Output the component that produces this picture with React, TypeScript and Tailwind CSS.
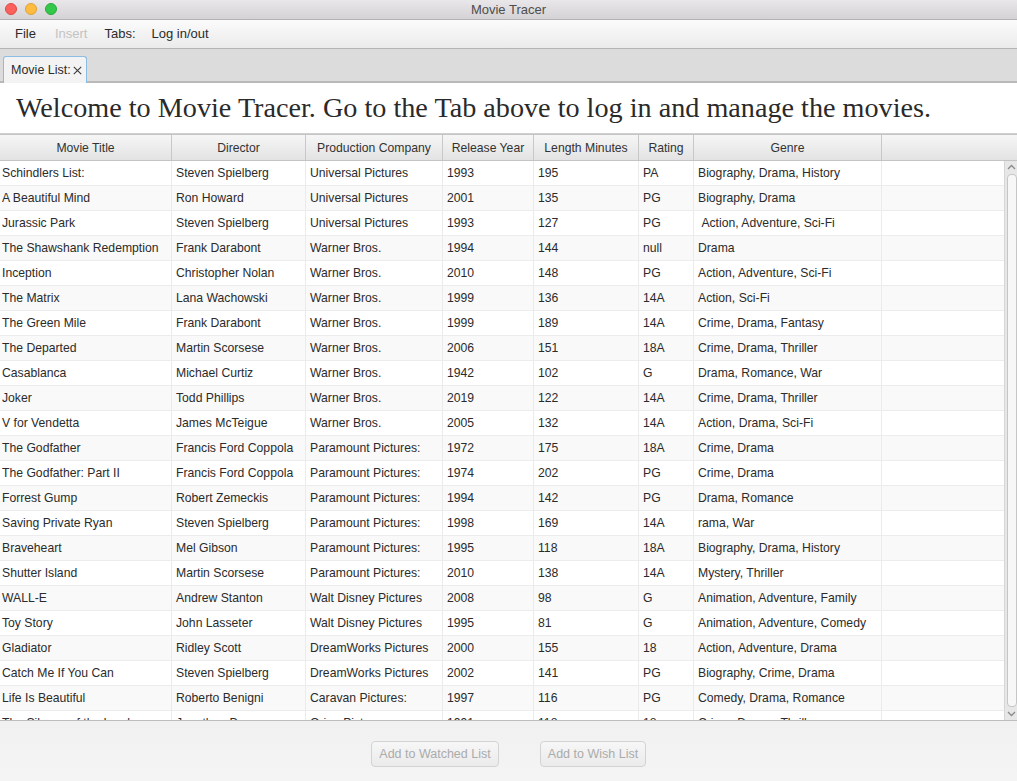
const columns = [
  { title: "Movie Title", w: "w-[172px]" },
  { title: "Director", w: "w-[134px]" },
  { title: "Production Company", w: "w-[137px]" },
  { title: "Release Year", w: "w-[91px]" },
  { title: "Length Minutes", w: "w-[105px]" },
  { title: "Rating", w: "w-[55px]" },
  { title: "Genre", w: "w-[188px]" },
];

const movies: string[][] = [
  ["Schindlers List:", "Steven Spielberg", "Universal Pictures", "1993", "195", "PA", "Biography, Drama, History"],
  ["A Beautiful Mind", "Ron Howard", "Universal Pictures", "2001", "135", "PG", "Biography, Drama"],
  ["Jurassic Park", "Steven Spielberg", "Universal Pictures", "1993", "127", "PG", "\u00a0Action, Adventure, Sci-Fi"],
  ["The Shawshank Redemption", "Frank Darabont", "Warner Bros.", "1994", "144", "null", "Drama"],
  ["Inception", "Christopher Nolan", "Warner Bros.", "2010", "148", "PG", "Action, Adventure, Sci-Fi"],
  ["The Matrix", "Lana Wachowski", "Warner Bros.", "1999", "136", "14A", "Action, Sci-Fi"],
  ["The Green Mile", "Frank Darabont", "Warner Bros.", "1999", "189", "14A", "Crime, Drama, Fantasy"],
  ["The Departed", "Martin Scorsese", "Warner Bros.", "2006", "151", "18A", "Crime, Drama, Thriller"],
  ["Casablanca", "Michael Curtiz", "Warner Bros.", "1942", "102", "G", "Drama, Romance, War"],
  ["Joker", "Todd Phillips", "Warner Bros.", "2019", "122", "14A", "Crime, Drama, Thriller"],
  ["V for Vendetta", "James McTeigue", "Warner Bros.", "2005", "132", "14A", "Action, Drama, Sci-Fi"],
  ["The Godfather", "Francis Ford Coppola", "Paramount Pictures:", "1972", "175", "18A", "Crime, Drama"],
  ["The Godfather: Part II", "Francis Ford Coppola", "Paramount Pictures:", "1974", "202", "PG", "Crime, Drama"],
  ["Forrest Gump", "Robert Zemeckis", "Paramount Pictures:", "1994", "142", "PG", "Drama, Romance"],
  ["Saving Private Ryan", "Steven Spielberg", "Paramount Pictures:", "1998", "169", "14A", "rama, War"],
  ["Braveheart", "Mel Gibson", "Paramount Pictures:", "1995", "118", "18A", "Biography, Drama, History"],
  ["Shutter Island", "Martin Scorsese", "Paramount Pictures:", "2010", "138", "14A", "Mystery, Thriller"],
  ["WALL-E", "Andrew Stanton", "Walt Disney Pictures", "2008", "98", "G", "Animation, Adventure, Family"],
  ["Toy Story", "John Lasseter", "Walt Disney Pictures", "1995", "81", "G", "Animation, Adventure, Comedy"],
  ["Gladiator", "Ridley Scott", "DreamWorks Pictures", "2000", "155", "18", "Action, Adventure, Drama"],
  ["Catch Me If You Can", "Steven Spielberg", "DreamWorks Pictures", "2002", "141", "PG", "Biography, Crime, Drama"],
  ["Life Is Beautiful", "Roberto Benigni", "Caravan Pictures:", "1997", "116", "PG", "Comedy, Drama, Romance"],
  ["The Silence of the Lambs", "Jonathan Demme", "Orion Pictures", "1991", "118", "18", "Crime, Drama, Thriller"],
];

function TitleBar() {
  return (
    <div className="relative h-[20px] shrink-0 bg-gradient-to-b from-[#e9e7e9] to-[#d4d2d4] border-b border-[#b3b3b3] flex items-center justify-center">
      <div className="absolute left-[5px] top-[3px] flex gap-[8px]">
        <span className="w-[12px] h-[12px] rounded-full bg-[#fc605c] border border-[#de4a45]" />
        <span className="w-[12px] h-[12px] rounded-full bg-[#fdbc40] border border-[#dea236]" />
        <span className="w-[12px] h-[12px] rounded-full bg-[#34c84a] border border-[#2aa83b]" />
      </div>
      <span className="text-[13px] text-[#4d4d4d]">Movie Tracer</span>
    </div>
  );
}

function MenuBar() {
  return (
    <div className="h-[29px] shrink-0 bg-gradient-to-b from-[#fbfbfb] to-[#ebebeb] border-b border-[#b4b4b4] flex items-center text-[13px] text-[#2b2b2b]">
      <span className="ml-[15px]">File</span>
      <span className="ml-[19px] text-[#c3c3c3]">Insert</span>
      <span className="ml-[17px]">Tabs:</span>
      <span className="ml-[16px]">Log in/out</span>
    </div>
  );
}

function TabStrip() {
  return (
    <div className="h-[34px] shrink-0 bg-[#dcdcdc] border-b-2 border-[#b9b9b9] flex items-end pl-[3px]">
      <div className="h-[27px] w-[84px] -mb-[2px] bg-[#f3f3f3] border border-b-0 border-[#8bbce3] rounded-t-[3px] flex items-center pl-[7px] text-[12.5px] text-[#2b2b2b]">
        <span>Movie List:</span>
        <svg width="9" height="9" viewBox="0 0 9 9" className="ml-[2px] mt-[1px]">
          <path d="M0.8 0.8 L8.2 8.2 M8.2 0.8 L0.8 8.2" stroke="#3a3a3a" strokeWidth="1.1" />
        </svg>
      </div>
    </div>
  );
}

function Scrollbar() {
  return (
    <div className="w-[13px] shrink-0 bg-[#e7e7e7] border-l border-[#d6d6d6] flex flex-col items-center">
      <svg width="9" height="6" viewBox="0 0 9 6" className="mt-[3px] shrink-0">
        <path d="M1 5 L4.5 1.5 L8 5" fill="none" stroke="#8a8a8a" strokeWidth="1.3" />
      </svg>
      <div className="mt-[4px] w-[10px] ml-[2px] flex-1 bg-[#f7f7f7] border border-[#c6c6c6] rounded-[4px]" />
      <svg width="9" height="6" viewBox="0 0 9 6" className="mt-[4px] mb-[3px] shrink-0">
        <path d="M1 1 L4.5 4.5 L8 1" fill="none" stroke="#8a8a8a" strokeWidth="1.3" />
      </svg>
    </div>
  );
}

function MovieTable() {
  return (
    <div className="flex-1 min-h-0 flex flex-col bg-white border-b border-[#bdbdbd]">
      <div className="h-[27px] shrink-0 flex bg-gradient-to-b from-[#f6f6f6] to-[#e3e3e3] border-t border-b border-[#c4c4c4] text-[12.2px] text-[#333]">
        {columns.map((c) => (
          <div key={c.title} className={`${c.w} shrink-0 border-r border-[#c8c8c8] flex items-center justify-center pt-[1px]`}>
            {c.title}
          </div>
        ))}
        <div className="flex-1" />
      </div>
      <div className="flex-1 min-h-0 flex overflow-hidden">
        <div className="flex-1 min-w-0 overflow-hidden">
          {movies.map((m, i) => (
            <div
              key={i}
              className={`h-[25px] flex border-b border-[#ececec] text-[12.2px] text-[#2b2b2b] ${i % 2 === 1 ? "bg-[#f9f9f9]" : "bg-white"}`}
            >
              {columns.map((c, j) => (
                <div
                  key={c.title}
                  className={`${c.w} shrink-0 border-r border-[#ebebeb] flex items-center whitespace-nowrap overflow-hidden ${j === 0 ? "pl-[2px]" : "pl-[4px]"}`}
                >
                  {m[j]}
                </div>
              ))}
              <div className="flex-1" />
            </div>
          ))}
        </div>
        <Scrollbar />
      </div>
    </div>
  );
}

export default function App() {
  return (
    <div className="w-[1017px] h-[781px] flex flex-col overflow-hidden bg-white font-['Liberation_Sans',Arial,sans-serif]">
      <TitleBar />
      <MenuBar />
      <TabStrip />
      <div className="h-[51px] shrink-0 bg-white border-b border-[#d0d0d0] flex items-center pl-[16px]">
        <span className="font-['Liberation_Serif','Times_New_Roman',serif] text-[28.2px] text-[#2a2a2a] leading-none whitespace-nowrap">
          Welcome to Movie Tracer. Go to the Tab above to log in and manage the movies.
        </span>
      </div>
      <MovieTable />
      <div className="h-[60px] shrink-0 bg-gradient-to-b from-[#f1f1f1] to-[#f4f4f4] flex items-start justify-center gap-[41px] pt-[20px]">
        <button className="h-[26px] w-[128px] rounded-[4px] border border-[#d3d3d3] bg-gradient-to-b from-[#f7f7f7] to-[#ebebeb] text-[12.5px] text-[#ababab]">
          Add to Watched List
        </button>
        <button className="h-[26px] w-[106px] rounded-[4px] border border-[#d3d3d3] bg-gradient-to-b from-[#f7f7f7] to-[#ebebeb] text-[12.5px] text-[#ababab]">
          Add to Wish List
        </button>
      </div>
    </div>
  );
}
